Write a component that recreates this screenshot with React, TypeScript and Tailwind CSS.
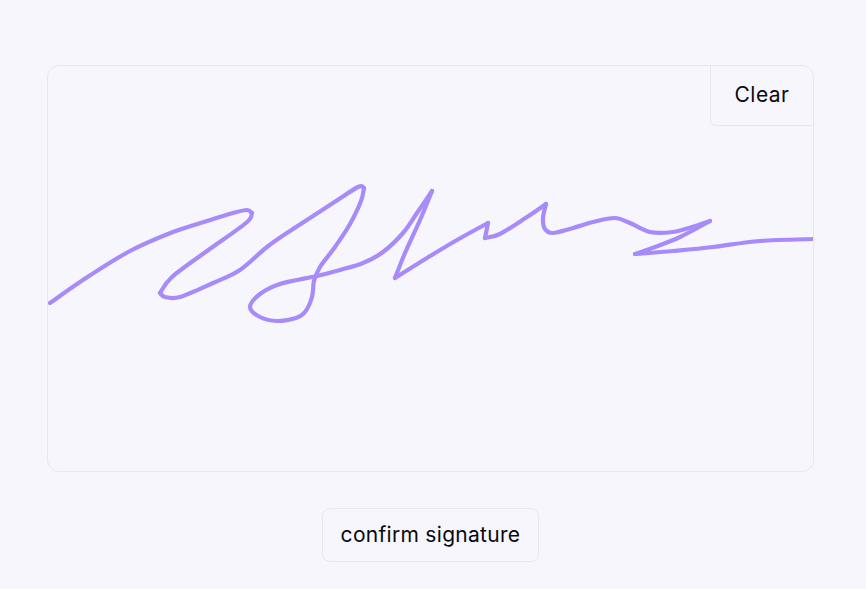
const strokes: number[][][] = [
  [[50,303],[83,280],[130,251],[173,232],[207,221],[233,213],[247,210],[252,213]],
  [[252,213],[246,223],[207,251],[172,277],[160,293]],
  [[160,293],[165,297],[180,297],[213,283],[240,270],[267,247],[293,229],[333,203],[358,187],[364,188]],
  [[364,188],[361,201],[350,224],[335,247],[320,267],[314,281],[312,297],[305,312],[296,318],[277,321],[260,317],[250,307],[260,294],[280,284],[317,276],[340,270],[363,263],[383,252],[403,233],[417,213],[432,191]],
  [[432,191],[420,220],[405,253],[395,278]],
  [[395,278],[427,258],[457,240],[488,223]],
  [[488,223],[485,238]],
  [[485,238],[500,234],[527,217],[546,204]],
  [[546,204],[543,218],[545,229],[553,233],[573,228],[593,222],[615,218],[630,223],[650,232],[673,232],[692,227],[710,221]],
  [[710,221],[680,237],[655,247],[635,254]],
  [[635,254],[673,251],[713,247],[760,241],[813,239]],
];

// catmull-rom through the sampled points, each stroke ends in a sharp cusp
function toPath(pts: number[][]) {
  let d = `M${pts[0][0]} ${pts[0][1]}`;
  for (let i = 0; i < pts.length - 1; i++) {
    const p0 = pts[Math.max(i - 1, 0)];
    const p1 = pts[i];
    const p2 = pts[i + 1];
    const p3 = pts[Math.min(i + 2, pts.length - 1)];
    const c1x = p1[0] + (p2[0] - p0[0]) / 6;
    const c1y = p1[1] + (p2[1] - p0[1]) / 6;
    const c2x = p2[0] - (p3[0] - p1[0]) / 6;
    const c2y = p2[1] - (p3[1] - p1[1]) / 6;
    d += ` C${c1x.toFixed(1)} ${c1y.toFixed(1)} ${c2x.toFixed(1)} ${c2y.toFixed(1)} ${p2[0]} ${p2[1]}`;
  }
  return d;
}

export default function App() {
  return (
    <div className="h-[589px] w-[866px] bg-[#f7f6fd] pl-[47px] pt-[65px] font-['Inter',sans-serif] text-[#09090f]">
      <div className="flex w-[767px] flex-col items-center">
        <div className="relative h-[407px] w-full overflow-hidden rounded-xl border border-[#e8e6ef]">
          {/* signature canvas */}
          <svg className="absolute -left-[48px] -top-[66px] blur-[0.5px]" width="866" height="589" viewBox="0 0 866 589" fill="none">
            {strokes.map((s, i) => (
              <path key={i} d={toPath(s)} stroke="#a78bfa" strokeWidth="4.2" strokeLinecap="round" strokeLinejoin="round" />
            ))}
          </svg>
          <button className="absolute right-0 top-0 h-[60px] w-[103px] rounded-bl-md border-b border-l border-[#e8e6ef] pb-[2px] text-[21px] font-normal leading-none tracking-[0.45px]">
            Clear
          </button>
        </div>
        <button className="mt-[36px] h-[54px] w-[217px] rounded-lg border border-[#e8e6ef] pb-[2px] text-[21px] font-normal leading-none tracking-[0.3px]">
          confirm signature
        </button>
      </div>
    </div>
  );
}
